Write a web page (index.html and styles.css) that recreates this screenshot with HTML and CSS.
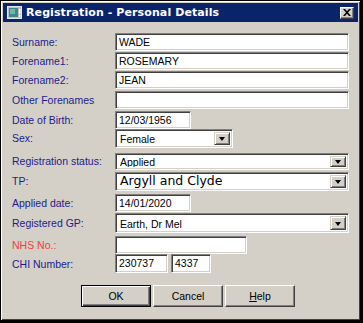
FILE: index.html
```html
<!DOCTYPE html>
<html>
<head>
<meta charset="utf-8">
<link rel="stylesheet" href="styles.css">
</head>
<body>
<div class="window">
  <div class="titlebar">
    <svg class="appicon" width="15" height="13" viewBox="0 0 15 13">
      <rect x="0.5" y="0.5" width="14" height="12" fill="#c0c0c0" stroke="#e8e8e8"/>
      <rect x="2" y="2" width="9" height="9" fill="#3d8a8a"/>
      <rect x="3" y="3" width="5" height="5" fill="#6fb7a8"/>
      <rect x="12" y="3" width="1.5" height="5" fill="#ffffff"/>
      <rect x="12" y="9" width="1.5" height="2" fill="#ffffff"/>
    </svg>
    <span class="title">Registration - Personal Details</span>
    <span class="closebtn">
      <svg width="8" height="7" viewBox="0 0 8 7"><path d="M0 0h2l2 2.2L6 0h2L5 3.5 8 7H6L4 4.8 2 7H0l3-3.5z" fill="#000"/></svg>
    </span>
  </div>
  <div class="client">
    <div class="form">
      <div class="row h19"><span class="label">Surname:</span><span class="edit wide">WADE</span></div>
      <div class="row h19"><span class="label">Forename1:</span><span class="edit wide">ROSEMARY</span></div>
      <div class="row h20"><span class="label">Forename2:</span><span class="edit wide">JEAN</span></div>
      <div class="row h20"><span class="label">Other Forenames</span><span class="edit wide"></span></div>
      <div class="row h19"><span class="label">Date of Birth:</span><span class="edit date">12/03/1956</span></div>
      <div class="row h24 top"><span class="label lbl19">Sex:</span><span class="combo sex"><span class="val">Female</span><span class="drop"><i class="tri"></i></span></span></div>
      <div class="row h19 top"><span class="label lbl17">Registration status:</span><span class="combo wide short"><span class="val">Applied</span><span class="drop"><i class="tri"></i></span></span></div>
      <div class="row h21 top"><span class="label lbl19">TP:</span><span class="combo wide tall"><span class="val big">Argyll and Clyde</span><span class="drop"><i class="tri"></i></span></span></div>
      <div class="row h20"><span class="label">Applied date:</span><span class="edit date">14/01/2020</span></div>
      <div class="row h22 top"><span class="label lbl20">Registered GP:</span><span class="combo wide gp"><span class="val">Earth, Dr Mel</span><span class="drop"><i class="tri"></i></span></span></div>
      <div class="row h19"><span class="label red">NHS No.:</span><span class="edit nhs"></span></div>
      <div class="row h19"><span class="label">CHI Number:</span><span class="chi"><span class="edit chi1">230737</span><span class="edit chi2">4337</span></span></div>
    </div>
    <div class="buttons">
      <span class="btn default"><span class="btnin">OK</span></span>
      <span class="btn"><span class="btnin">Cancel</span></span>
      <span class="btn"><span class="btnin"><u>H</u>elp</span></span>
    </div>
  </div>
</div>
</body>
</html>
```
FILE: styles.css
```css
html, body {
  margin: 0;
  padding: 0;
  background: #000;
}
.window {
  width: 363px;
  height: 323px;
  box-sizing: border-box;
  background: #d4d0c8;
  border-top: 1px solid #000;
  border-left: 1px solid #000;
  border-right: 3px solid #000;
  border-bottom: 3px solid #000;
  padding: 0;
  font-family: "Liberation Sans", Arial, sans-serif;
  font-size: 10.5px;
  position: relative;
  box-shadow: inset 1px 1px 0 #fff, inset -1px -1px 0 #404040;
}
.titlebar {
  margin: 2px 2px 0 2px;
  height: 19px;
  background: #0a246a;
  display: flex;
  align-items: center;
  padding-left: 4px;
  padding-right: 3px;
}
.appicon {
  flex: none;
  margin-right: 4px;
}
.title {
  color: #fff;
  font-family: "DejaVu Sans", Verdana, sans-serif;
  font-weight: bold;
  font-size: 11px;
  flex: 1;
  letter-spacing: 0.1px;
}
.closebtn {
  width: 14px;
  height: 12px;
  box-sizing: border-box;
  background: #d4d0c8;
  border-top: 1px solid #fff;
  border-left: 1px solid #fff;
  border-right: 1px solid #404040;
  border-bottom: 1px solid #404040;
  box-shadow: inset -1px -1px 0 #808080;
  display: flex;
  align-items: center;
  justify-content: center;
  margin-right: 1px;
}
.client {
  padding: 10px 0 0 11px;
}
.form {
  display: flex;
  flex-direction: column;
}
.row {
  display: flex;
  align-items: center;
}
.row.top {
  align-items: flex-start;
}
.h19 { height: 19px; }
.h20 { height: 20px; }
.h21 { height: 21px; }
.h22 { height: 22px; }
.h24 { height: 24px; }
.label {
  width: 103px;
  color: #1c1c8c;
  white-space: nowrap;
}
.lbl17 { line-height: 17px; }
.lbl19 { line-height: 19px; }
.lbl20 { line-height: 20px; }
.label.red {
  color: #f04040;
}
.edit {
  box-sizing: border-box;
  height: 18px;
  background: #fff;
  border-top: 1px solid #808080;
  border-left: 1px solid #808080;
  border-right: 1px solid #fff;
  border-bottom: 1px solid #fff;
  box-shadow: inset 1px 1px 0 #404040, inset -1px -1px 0 #d4d0c8;
  padding: 1px 3px 0 3px;
  line-height: 15px;
  color: #000;
  white-space: nowrap;
  overflow: hidden;
}
.wide { width: 234px; }
.date { width: 76px; }
.nhs { width: 132px; }
.chi {
  display: flex;
  gap: 3px;
}
.chi1 { width: 53px; }
.chi2 { width: 40px; }
.edit.chi1, .edit.chi2 { height: 19px; }
.combo {
  box-sizing: border-box;
  display: flex;
  background: #fff;
  border-top: 1px solid #808080;
  border-left: 1px solid #808080;
  border-right: 1px solid #fff;
  border-bottom: 1px solid #fff;
  box-shadow: inset 1px 1px 0 #404040, inset -1px -1px 0 #d4d0c8;
  padding: 2px;
  height: 19px;
}
.combo.short { height: 17px; }
.combo.tall { height: 19px; padding: 1px 2px; }
.combo.gp { height: 20px; }
.sex { width: 118px; }
.val {
  flex: 1;
  padding-left: 2px;
  line-height: 14px;
  color: #000;
  white-space: nowrap;
  overflow: hidden;
}
.short .val { line-height: 13px; }
.gp .val { line-height: 16px; }
.val.big {
  font-family: "DejaVu Sans", Verdana, sans-serif;
  font-size: 12.5px;
  line-height: 16px;
  height: 16px;
  margin-top: -1px;
}
.tall .drop { margin: 1px 0; }
.drop {
  width: 16px;
  flex: none;
  box-sizing: border-box;
  background: #d4d0c8;
  border-top: 1px solid #d4d0c8;
  border-left: 1px solid #d4d0c8;
  border-right: 1px solid #404040;
  border-bottom: 1px solid #404040;
  box-shadow: inset 1px 1px 0 #fff, inset -1px -1px 0 #808080;
  display: flex;
  align-items: center;
  justify-content: center;
}
.tri {
  width: 0;
  height: 0;
  border-left: 3.5px solid transparent;
  border-right: 3.5px solid transparent;
  border-top: 4px solid #000;
  margin-top: 1px;
}
.buttons {
  display: flex;
  gap: 2px;
  margin-top: 12px;
  margin-left: 69px;
}
.btn {
  width: 70px;
  height: 22px;
  box-sizing: border-box;
  background: #d4d0c8;
  border-top: 1px solid #fff;
  border-left: 1px solid #fff;
  border-right: 1px solid #404040;
  border-bottom: 1px solid #404040;
  box-shadow: inset -1px -1px 0 #808080;
  display: flex;
}
.btn.default {
  border: 1px solid #000;
  box-shadow: inset 1px 1px 0 #fff, inset -1px -1px 0 #404040, inset -2px -2px 0 #808080;
}
.btnin {
  flex: 1;
  display: flex;
  align-items: center;
  justify-content: center;
  color: #000;
}
```
